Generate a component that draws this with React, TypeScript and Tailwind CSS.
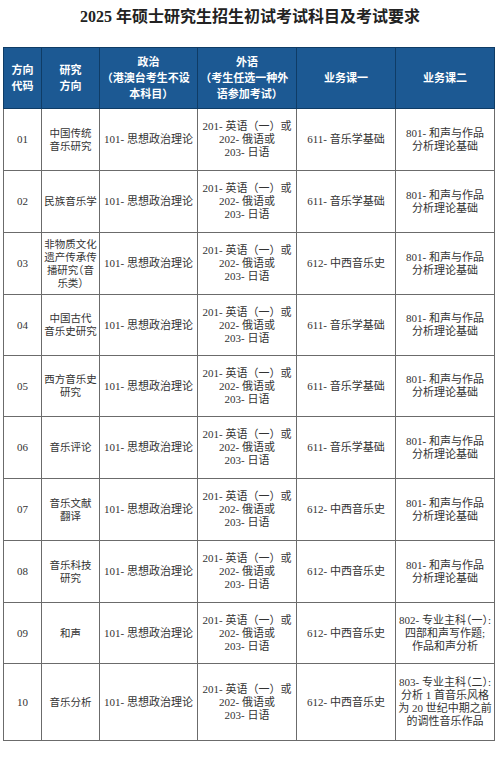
const rows = [
  { code: "01", dir: "中国传统\n音乐研究", c1: "611- 音乐学基础", c2: "801- 和声与作品\n分析理论基础", h: "h-[62px]" },
  { code: "02", dir: "民族音乐学", c1: "611- 音乐学基础", c2: "801- 和声与作品\n分析理论基础", h: "h-[62px]" },
  { code: "03", dir: "非物质文化\n遗产传承传\n播研究（音\n乐类）", c1: "612- 中西音乐史", c2: "801- 和声与作品\n分析理论基础", h: "h-[62px]" },
  { code: "04", dir: "中国古代\n音乐史研究", c1: "611- 音乐学基础", c2: "801- 和声与作品\n分析理论基础", h: "h-[61px]" },
  { code: "05", dir: "西方音乐史\n研究", c1: "611- 音乐学基础", c2: "801- 和声与作品\n分析理论基础", h: "h-[61px]" },
  { code: "06", dir: "音乐评论", c1: "611- 音乐学基础", c2: "801- 和声与作品\n分析理论基础", h: "h-[62px]" },
  { code: "07", dir: "音乐文献\n翻译", c1: "612- 中西音乐史", c2: "801- 和声与作品\n分析理论基础", h: "h-[62px]" },
  { code: "08", dir: "音乐科技\n研究", c1: "612- 中西音乐史", c2: "801- 和声与作品\n分析理论基础", h: "h-[62px]" },
  { code: "09", dir: "和声", c1: "612- 中西音乐史", c2: "802- 专业主科（一）:\n四部和声写作题;\n作品和声分析", h: "h-[61px]" },
  { code: "10", dir: "音乐分析", c1: "612- 中西音乐史", c2: "803- 专业主科（二）:\n分析 1 首音乐风格\n为 20 世纪中期之前\n的调性音乐作品", h: "h-[77px]" },
];

const App = () => {
  return (
    <div className="w-[500px] h-[757px] bg-white font-['Liberation_Serif','Noto_Sans_CJK_SC',serif] text-[#333]">
      <h1 className="pt-[7px] h-[47px] text-center text-[16px] leading-[20px] font-bold text-[#222]">
        2025 年硕士研究生招生初试考试科目及考试要求
      </h1>

      <table className="ml-[3px] w-[491px] table-fixed border-collapse text-center whitespace-pre">
        <colgroup>
          <col className="w-[38px]" />
          <col className="w-[58px]" />
          <col className="w-[98px]" />
          <col className="w-[99px]" />
          <col className="w-[99px]" />
          <col className="w-[99px]" />
        </colgroup>
        <thead>
          <tr className="h-[61px] bg-[#1c5993] text-white text-[11px] leading-[16px] font-bold [font-feature-settings:'halt']">
            <th className="border border-[#0f3c66]">{"方向\n代码"}</th>
            <th className="border border-[#0f3c66]">{"研究\n方向"}</th>
            <th className="border border-[#0f3c66]">{"政治\n（港澳台考生不设\n本科目）"}</th>
            <th className="border border-[#0f3c66]">{"外语\n（考生任选一种外\n语参加考试）"}</th>
            <th className="border border-[#0f3c66]">业务课一</th>
            <th className="border border-[#0f3c66]">业务课二</th>
          </tr>
        </thead>
        <tbody className="text-[11px] leading-[13px]">
          {rows.map((r) => (
            <tr key={r.code} className={r.h}>
              <td className="border border-[#6b6b6b]">{r.code}</td>
              <td className="border border-[#6b6b6b] text-[10.5px] [font-feature-settings:'halt']">{r.dir}</td>
              <td className="border border-[#6b6b6b]">101- 思想政治理论</td>
              <td className="border border-[#6b6b6b]">
                {"201- 英语（一）或\n202- 俄语或\n203- 日语"}
              </td>
              <td className="border border-[#6b6b6b]">{r.c1}</td>
              <td className="border border-[#6b6b6b] [font-feature-settings:'halt']">{r.c2}</td>
            </tr>
          ))}
        </tbody>
      </table>
    </div>
  );
};

export default App;
